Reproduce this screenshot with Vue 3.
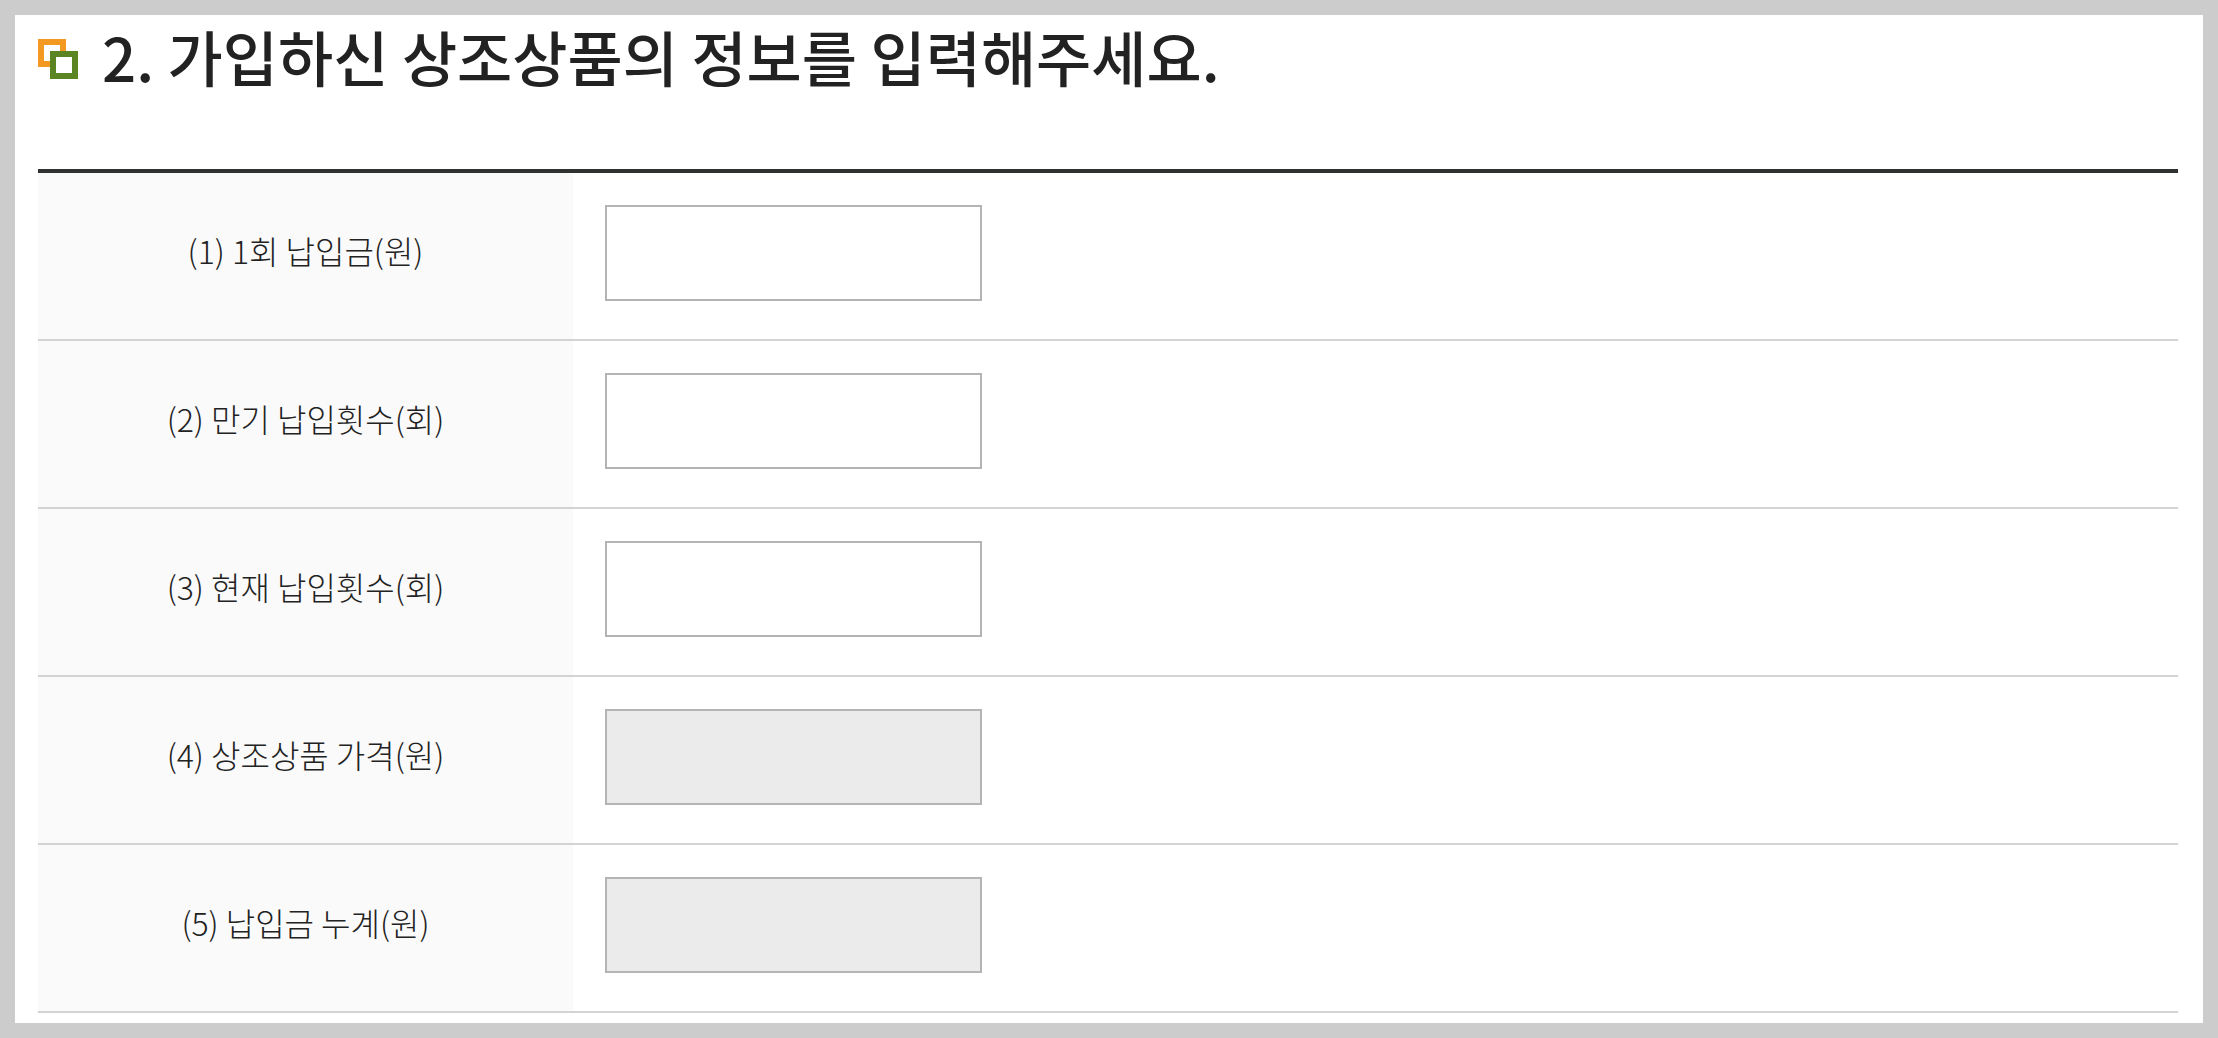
<script setup>
const fields = [
  { id: 'payment', label: '(1) 1회 납입금(원)', readonly: false },
  { id: 'total-count', label: '(2) 만기 납입횟수(회)', readonly: false },
  { id: 'current-count', label: '(3) 현재 납입횟수(회)', readonly: false },
  { id: 'price', label: '(4) 상조상품 가격(원)', readonly: true },
  { id: 'paid-total', label: '(5) 납입금 누계(원)', readonly: true },
]
</script>

<template>
  <main class="page">
    <h1 class="title">
      <svg class="mark" viewBox="0 0 40 40" aria-hidden="true">
        <rect x="3" y="3" width="22" height="22" fill="#fff" stroke="#f39820" stroke-width="6" />
        <rect x="15" y="15" width="22" height="22" fill="#fff" stroke="#5a8522" stroke-width="6" />
      </svg>
      <span>2. 가입하신 상조상품의 정보를 입력해주세요.</span>
    </h1>
    <table class="form">
      <tbody>
        <tr v-for="f in fields" :key="f.id">
          <th scope="row"><label :for="f.id">{{ f.label }}</label></th>
          <td><input :id="f.id" type="text" :readonly="f.readonly" /></td>
        </tr>
      </tbody>
    </table>
  </main>
</template>

<style>
body {
  background: #ccc;
}
</style>

<style scoped>
.page {
  margin: 15px;
  padding: 0 25px 10px 23px;
  background: #fff;
  font-family: "Noto Sans CJK KR", sans-serif;
}
.title {
  display: flex;
  align-items: flex-start;
  gap: 24px;
  margin: 0;
  padding-bottom: 72px;
  font-size: 60px;
  font-weight: 500;
  line-height: 82px;
  color: #222;
}
.mark {
  flex: none;
  width: 40px;
  height: 40px;
  margin-top: 24px;
}
.form {
  width: 100%;
  table-layout: fixed;
  border-spacing: 0;
  border-top: 4px solid #2f3230;
}
th,
td {
  border-bottom: 2px solid #d3d3d3;
}
th {
  width: 25%;
  padding: 0 0 12px;
  background: #fafafa;
  font-size: 32px;
  font-weight: 300;
  line-height: 48px;
  color: #222;
}
td {
  padding: 32px 32px 38px;
}
input {
  display: block;
  box-sizing: border-box;
  width: 377px;
  height: 96px;
  padding: 0 20px;
  border: 2px solid #b4b4b4;
  border-radius: 0;
  background: #fff;
  font: inherit;
  font-size: 32px;
  color: #333;
}
input:read-only {
  background: #ebebeb;
}
</style>
